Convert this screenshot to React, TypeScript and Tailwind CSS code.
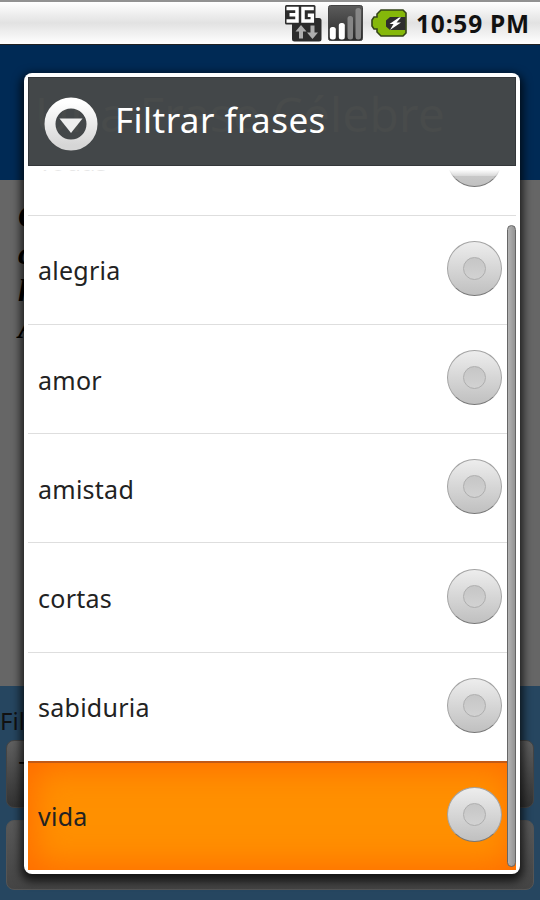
import React, { type FC } from 'react'

interface FilterRowProps {
  label: string
  selected?: boolean
}

const FILTERS: FilterRowProps[] = [
  { label: 'Todas' },
  { label: 'alegria' },
  { label: 'amor' },
  { label: 'amistad' },
  { label: 'cortas' },
  { label: 'sabiduria' },
  { label: 'vida', selected: true }
]

const NetworkIcon = () => (
  <svg width="37" height="37" viewBox="0 0 37 37">
    <rect x="7" y="13" width="29.500" height="23.500" rx="2.5" fill="#2c2c2c" />
    <rect x="0" y="0" width="30.500" height="19.500" rx="1.500" fill="#2c2c2c" />
    <path
      d="M1.500 3.500h10.500v12.500H1.500M4.500 9.750h7M28.800 3.500h-10.800v12.500h9.300v-5.700h-4.500"
      fill="none"
      stroke="#fff"
      strokeWidth="3.500"
    />
    <path d="M16 20l5.500 6.500h-3.500v7h-4v-7h-3.500zM27.500 34l-5.500-6.500h3.500v-7h4v7h3.500z" fill="#adadad" />
  </svg>
)

const SignalIcon = () => (
  <svg width="35" height="37" viewBox="0 0 35 37">
    <defs>
      <linearGradient id="signal" x1="0" y1="0" x2="0" y2="1">
        <stop offset="0" stopColor="#5c5c5c" />
        <stop offset="1" stopColor="#292929" />
      </linearGradient>
    </defs>
    <rect x="0.500" y="0.500" width="34" height="35" rx="2" fill="url(#signal)" stroke="#444" />
    <rect x="1.800" y="22" width="6" height="12.500" rx="2.500" fill="#fff" />
    <rect x="10.800" y="18" width="6" height="16.500" rx="2.500" fill="#fff" />
    <rect x="19.500" y="11" width="5.500" height="23.500" rx="2.500" fill="#868686" />
    <rect x="27.500" y="3" width="5.500" height="31.500" rx="2.500" fill="#868686" />
  </svg>
)

const BatteryIcon = () => (
  <svg width="36" height="28" viewBox="0 0 36 28">
    <path
      d="M10 1h22l3 3v20l-3 3H10l-4-4v-3H3l-2-3v-6l2-3h3V5z"
      fill="#85b80a"
      stroke="#34441a"
      strokeWidth="1.600"
    />
    <path d="M34.500 8H19l-4 3.500v6l4 3.500h15.500z" fill="#2e2e2e" />
    <path d="M28 8.500l-9.500 6.500h4l-3.500 6 11-7.500h-4.500l4.500-5z" fill="#fff" />
  </svg>
)

const StatusBar = () => (
  <div className="flex h-[45px] items-center justify-end border-t-2 border-b border-t-[#929292] border-b-[#222] bg-linear-to-b from-white via-[#e2e2e2] to-white pr-[11px]">
    <div className="mr-[6px]">
      <NetworkIcon />
    </div>
    <div className="mr-[8px]">
      <SignalIcon />
    </div>
    <div className="mr-[9px]">
      <BatteryIcon />
    </div>
    <p className="w-[113px] pt-0.5 text-[24.500px] leading-none font-bold tracking-[0.8px] whitespace-nowrap text-[#111]">10:59 PM</p>
  </div>
)

const Radio = () => (
  <div className="flex size-[55px] shrink-0 items-center justify-center rounded-full border border-[#a3a3a3] border-b-[#777] bg-linear-to-b from-[#ededed] to-[#c0c0c0]">
    <div className="size-[23px] rounded-full border border-[#aeaeae] bg-linear-to-b from-[#c6c6c6] to-[#d2d2d2]" />
  </div>
)

const FilterRow: FC<FilterRowProps> = ({ label, selected }) => (
  <div
    className={
      selected
        ? 'flex h-[109.200px] shrink-0 items-center justify-between border-t-2 border-[#c05a18] bg-[#ff9000] pr-[14px] pb-1 pl-[10px] shadow-[inset_0_0_34px_4px_#ff6a00]'
        : 'flex h-[109.200px] shrink-0 items-center justify-between border-t border-[#dedede] pr-[14px] pb-[3px] pl-[10px]'
    }
  >
    <span className="pt-1 text-[25px] leading-8 tracking-[0.25px] text-[#222]">{label}</span>
    <Radio />
  </div>
)

const TitleIcon = () => (
  <svg width="54" height="54" viewBox="0 0 54 54">
    <defs>
      <linearGradient id="ring" x1="0" y1="0" x2="0" y2="1">
        <stop offset="0" stopColor="#fff" />
        <stop offset="1" stopColor="#d6d6d6" />
      </linearGradient>
    </defs>
    <circle cx="27" cy="27" r="21" fill="none" stroke="url(#ring)" strokeWidth="11" />
    <path d="M15.500 21.500h23L27 36z" fill="#eee" />
  </svg>
)

const FilterDialog = () => (
  <div className="absolute top-[73px] left-6 flex h-[801px] w-[496px] flex-col overflow-hidden rounded-[8px] bg-white p-1 shadow-[0_4px_10px_3px_rgba(0,0,0,0.75)]">
    <div className="relative flex h-[89px] shrink-0 items-center overflow-hidden border border-[#34373a] bg-[#434749] pl-[15px]">
      <p className="absolute top-0 left-[6px] text-[48px] whitespace-nowrap text-[#484b4b]">Una Frase Célebre</p>
      <div className="relative mt-1">
        <TitleIcon />
      </div>
      <h1 className="relative pb-1 pl-[17px] text-[35px] leading-none tracking-[0.45px] text-white">Filtrar frases</h1>
    </div>
    <div className="relative flex min-h-0 flex-1 flex-col justify-end overflow-hidden">
      {FILTERS.map((filter) => (
        <FilterRow key={filter.label} {...filter} />
      ))}
      <div className="absolute inset-x-0 top-0 h-[10px] bg-linear-to-b from-white from-35% to-white/30" />
      <div className="absolute right-0 bottom-[3px] h-[642px] w-[9px] rounded-full border border-[#666] bg-linear-to-r from-[#b4b4b4] to-[#949494]" />
    </div>
  </div>
)

const App = () => (
  <div className="relative flex h-[900px] w-[540px] flex-col overflow-hidden bg-[#666] font-['Noto_Sans','Open_Sans',sans-serif]">
    <StatusBar />
    <div className="h-[135px] bg-[#002a55]" />
    <div className="flex-1 bg-[#666666] pt-[18px] pl-[18px] font-['Liberation_Serif',serif] text-[32px] leading-[37px] font-bold text-black italic">
      <p>C</p>
      <p>c</p>
      <p>h</p>
      <p>A</p>
    </div>
    <div className="flex h-[214px] flex-col bg-[#264660] px-1.5">
      <p className="-ml-1.5 pt-[18px] text-[24px] leading-[34px] text-[#111]">Filtrar</p>
      <div className="mt-[2px] h-[68px] rounded-lg border border-[#444] bg-linear-to-b from-[#606060] to-[#333] pt-3 pl-3 text-[22px] text-black">Todas</div>
      <div className="mt-3 h-[70px] rounded-lg border border-[#555] bg-linear-to-b from-[#595959] to-[#444]" />
    </div>
    <FilterDialog />
  </div>
)

export default App
